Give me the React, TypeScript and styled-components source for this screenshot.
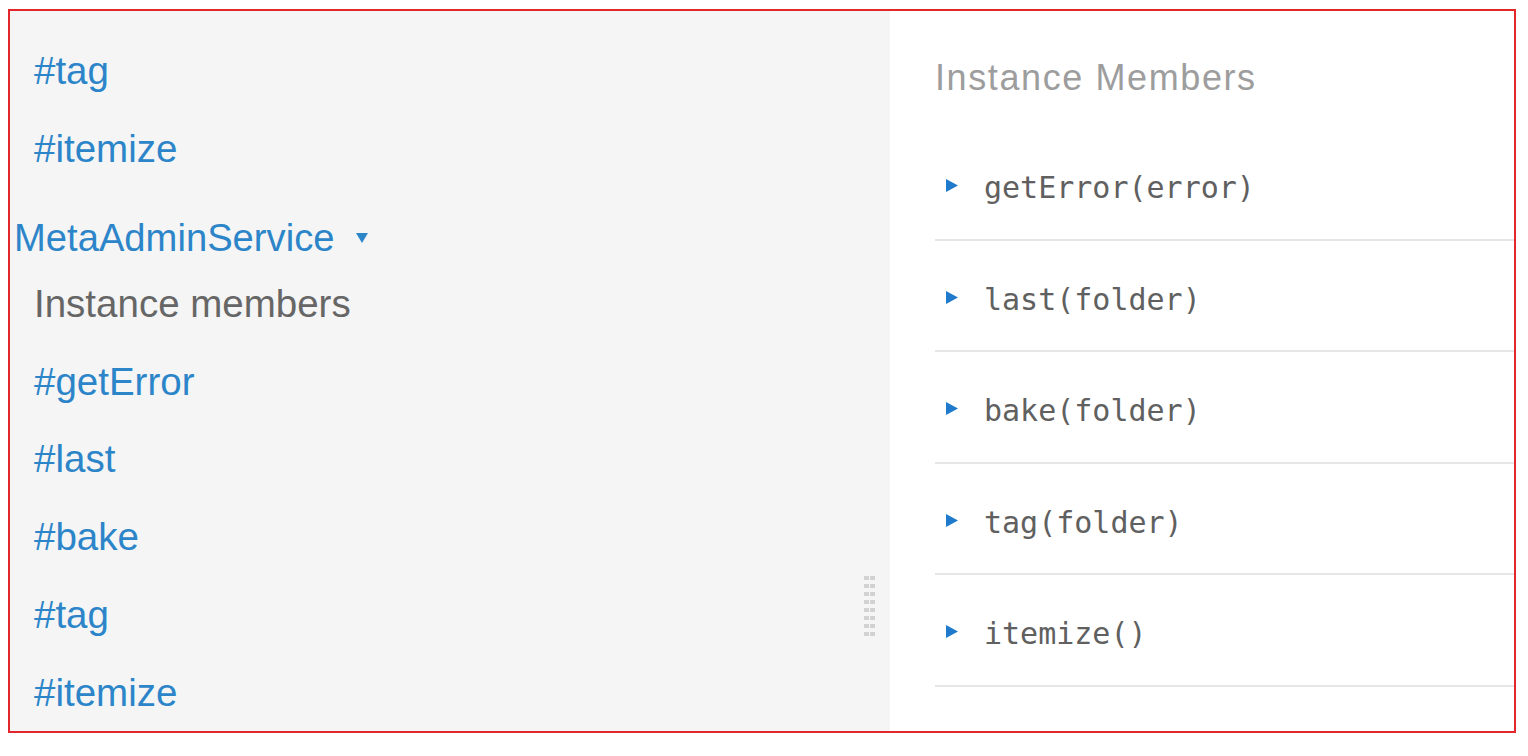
import React from "react";
import styled, { createGlobalStyle } from "styled-components";

const GlobalStyle = createGlobalStyle`
  html, body { margin: 0; padding: 0; background: #ffffff; }
  body { font-family: "Liberation Sans", Arial, sans-serif; }
  * { box-sizing: border-box; }
`;

const Frame = styled.div`
  margin: 9px 0 0 8px;
  width: 1508px;
  height: 724px;
  border: 2px solid #e3262b;
  display: flex;
  overflow: hidden;
`;

const Sidebar = styled.nav`
  position: relative;
  width: 880px;
  flex: 0 0 880px;
  background: #f5f5f5;
  padding-top: 21px;
  display: flex;
  flex-direction: column;
`;

const NavLink = styled.a<{ $muted?: boolean }>`
  display: block;
  padding-left: 24px;
  font-size: 38.5px;
  line-height: 77.7px;
  color: ${(p) => (p.$muted ? "#666666" : "#2d85c9")};
  text-decoration: none;
  white-space: nowrap;
`;

const SectionTitle = styled.a`
  display: flex;
  align-items: baseline;
  margin-top: 25px;
  padding-left: 4px;
  font-size: 38.2px;
  line-height: 52.6px;
  color: #2d85c9;
  text-decoration: none;
  white-space: nowrap;
`;

const Caret = styled.svg`
  margin-left: 22px;
  width: 12px;
  height: 10px;
  position: relative;
  top: -8px;
`;

const DragHandle = styled.div`
  position: absolute;
  right: 15px;
  top: 565px;
  width: 11px;
  height: 64px;
  background:
    linear-gradient(to right, transparent 5px, #f5f5f5 5px, #f5f5f5 6px, transparent 6px),
    linear-gradient(#d2d2d2 0, #d2d2d2 4px, transparent 4px) 0 0 / 100% 8px;
`;

const Content = styled.main`
  flex: 1;
  background: #ffffff;
  padding: 46px 0 0 45px;
`;

const Heading = styled.h2`
  margin: 0 0 30px 0;
  font-family: "Liberation Sans", Arial, sans-serif;
  font-weight: 400;
  font-size: 36px;
  letter-spacing: 1.6px;
  line-height: 42px;
  color: #9d9d9d;
`;

const MemberList = styled.div`
  display: flex;
  flex-direction: column;
`;

const MemberRow = styled.div`
  display: flex;
  align-items: center;
  height: 111.5px;
  padding: 42px 0 33.5px 11px;
  border-bottom: 2px solid #e6e6e6;
`;

const Toggle = styled.svg`
  width: 12px;
  height: 13px;
  flex: 0 0 12px;
  margin-bottom: 5px;
`;

const Signature = styled.code`
  margin-left: 26px;
  font-family: "DejaVu Sans Mono", "Liberation Mono", monospace;
  font-size: 30px;
  line-height: 34px;
  color: #606060;
  white-space: nowrap;
`;

const topLinks = ["#tag", "#itemize"];
const subLinks = ["#getError", "#last", "#bake", "#tag", "#itemize"];
const members = ["getError(error)", "last(folder)", "bake(folder)", "tag(folder)", "itemize()"];

export default function App() {
  return (
    <>
      <GlobalStyle />
      <Frame>
        <Sidebar>
          {topLinks.map((l, i) => (
            <NavLink key={"t" + i}>{l}</NavLink>
          ))}
          <SectionTitle>
            MetaAdminService
            <Caret viewBox="0 0 12 10">
              <polygon points="0,0 12,0 6,10" fill="#2d85c9" />
            </Caret>
          </SectionTitle>
          <NavLink $muted>Instance members</NavLink>
          {subLinks.map((l, i) => (
            <NavLink key={"s" + i}>{l}</NavLink>
          ))}
          <DragHandle />
        </Sidebar>
        <Content>
          <Heading>Instance Members</Heading>
          <MemberList>
            {members.map((m) => (
              <MemberRow key={m}>
                <Toggle viewBox="0 0 12 13">
                  <polygon points="0,0 12,6.5 0,13" fill="#1f7acc" />
                </Toggle>
                <Signature>{m}</Signature>
              </MemberRow>
            ))}
          </MemberList>
        </Content>
      </Frame>
    </>
  );
}
